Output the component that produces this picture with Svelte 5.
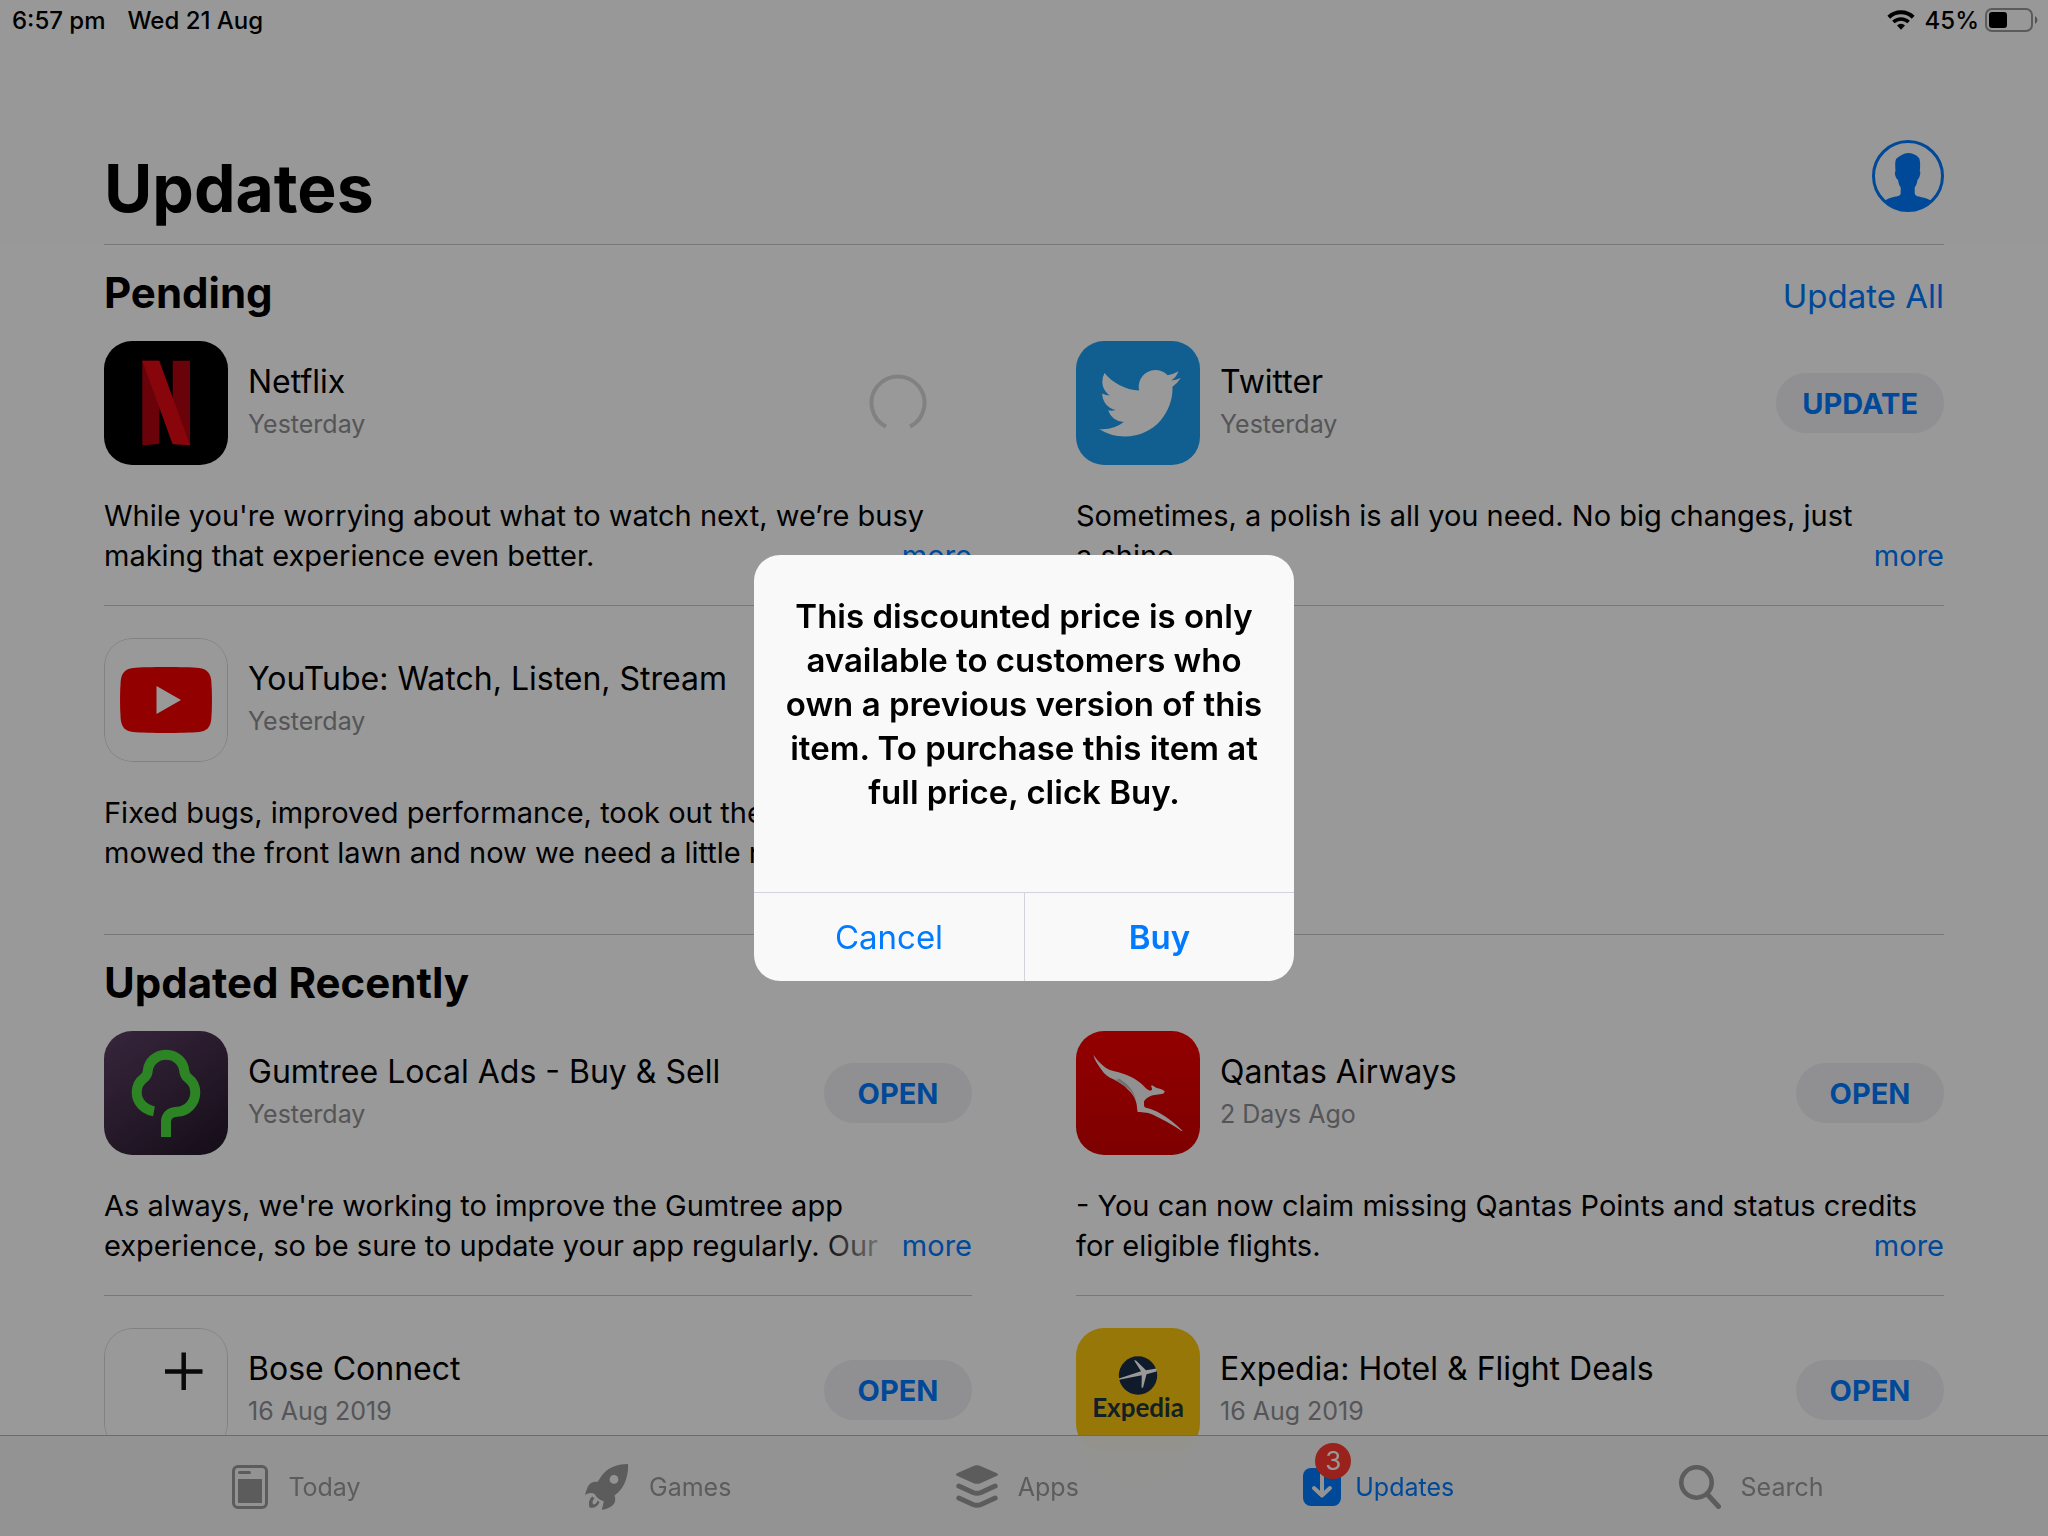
<script>
  const sections = [
    {
      title: 'Pending',
      action: 'Update All',
      apps: [
        { icon: 'netflix', name: 'Netflix', date: 'Yesterday', state: 'loading', notes: "While you're worrying about what to watch next, we’re busy making that experience even better." },
        { icon: 'twitter', name: 'Twitter', date: 'Yesterday', state: 'UPDATE', notes: 'Sometimes, a polish is all you need. No big changes, just\na shine.' },
        { icon: 'youtube', name: 'YouTube: Watch, Listen, Stream', date: 'Yesterday', state: 'UPDATE', notes: 'Fixed bugs, improved performance, took out the trash,\nmowed the front lawn and now we need a little rest.' }
      ]
    },
    {
      title: 'Updated Recently',
      action: '',
      apps: [
        { icon: 'gumtree', name: 'Gumtree Local Ads - Buy & Sell', date: 'Yesterday', state: 'OPEN', notes: "As always, we're working to improve the Gumtree app\nexperience, so be sure to update your app regularly. Our" },
        { icon: 'qantas', name: 'Qantas Airways', date: '2 Days Ago', state: 'OPEN', notes: '- You can now claim missing Qantas Points and status credits for eligible flights.' },
        { icon: 'bose', name: 'Bose Connect', date: '16 Aug 2019', state: 'OPEN', notes: '' },
        { icon: 'expedia', name: 'Expedia: Hotel & Flight Deals', date: '16 Aug 2019', state: 'OPEN', notes: '' }
      ]
    }
  ];
  const tabs = ['Today', 'Games', 'Apps', 'Updates', 'Search'];
</script>

<div class="screen">
  <div class="top">
    <div class="status">
      <span>6:57 pm</span>
      <span class="day">Wed 21 Aug</span>
      <svg class="wifi" width="28" height="20" viewBox="0 0 28 20" aria-label="Wi-Fi">
        <path d="M1.8 7.2A17.5 17.5 0 0 1 26.2 7.2" fill="none" stroke="#000" stroke-width="4" />
        <path d="M6.4 12A11 11 0 0 1 21.6 12" fill="none" stroke="#000" stroke-width="3.6" />
        <path d="M10 15.4a5.8 5.8 0 0 1 8 0l-4 4.4z" />
      </svg>
      <span class="charge">45%</span>
      <svg width="54" height="24" viewBox="0 0 54 24" aria-label="Battery">
        <rect x="1" y="1" width="46" height="22" rx="6" fill="none" stroke="#000" stroke-opacity=".4" stroke-width="2" />
        <rect x="4" y="4" width="18" height="16" rx="3" />
        <path d="M50 8a4.5 4.5 0 0 1 0 8z" fill-opacity=".45" />
      </svg>
    </div>
    <header>
      <h1>Updates</h1>
      <button class="avatar" aria-label="Account">
        <svg width="72" height="72" viewBox="0 0 72 72">
          <clipPath id="ring"><circle cx="36" cy="36" r="35" /></clipPath>
          <circle cx="36" cy="36" r="34.5" fill="none" stroke="#007aff" stroke-width="3" />
          <path clip-path="url(#ring)" fill="#007aff" d="M23.5 31C23 26 23 20 24.500 18.500C28 15.500 32 13 36 13C40 13 44 14.500 46.500 17.500C48.500 19 48.300 26 47.800 31C49 32 48 38 45.500 40C45 43 44.500 45 42.700 47.500V53C43 56.500 47 56.500 51 57.500C55 58.500 58 60 60 61V72H12V61C15 59 18 57.800 21.500 57C25 56.200 28.500 56.500 28.700 53V47.500C27 45 26.500 43 26 40C23.500 38 22 33 23.500 31Z" />
        </svg>
      </button>
    </header>
  </div>

  <main>
    {#each sections as section}
      <section>
        <div class="heading">
          <h2>{section.title}</h2>
          {#if section.action}<button class="link">{section.action}</button>{/if}
        </div>
        <div class="grid">
          {#each section.apps as app, i}
            <article class:ruled={i < 2}>
              <div class="app">
                <div class="tile">{@render tile(app.icon)}</div>
                <div class="label">
                  <h3>{app.name}</h3>
                  <p>{app.date}</p>
                </div>
                {#if app.state === 'loading'}
                  <svg class="spinner" width="58" height="58" viewBox="0 0 58 58" aria-label="Loading">
                    <path d="M17 52.600A26.500 26.500 0 1 1 41 52.600" fill="none" stroke="#d8d8dc" stroke-width="4" />
                  </svg>
                {:else}
                  <button class="pill">{app.state}</button>
                {/if}
              </div>
              <div class="notes">
                {#if app.notes}<button class="more">more</button>{/if}
                <p>{app.notes}</p>
              </div>
            </article>
          {/each}
        </div>
      </section>
    {/each}
  </main>

  <nav>
    {#each tabs as tab}
      <button class="tab" class:active={tab === 'Updates'}>
        <span class="glyph">
          {@render glyph(tab)}
          {#if tab === 'Updates'}<span class="badge">3</span>{/if}
        </span>
        {tab}
      </button>
    {/each}
  </nav>

  <div class="scrim">
    <div class="alert" role="alertdialog" aria-modal="true" aria-labelledby="alert-text">
      <p id="alert-text">This discounted price is only available to customers who own a previous version of this item. To purchase this item at full price, click Buy.</p>
      <div class="choices">
        <button>Cancel</button>
        <button class="primary">Buy</button>
      </div>
    </div>
  </div>
</div>

{#snippet tile(name)}
  <svg width="124" height="124" viewBox="0 0 124 124" aria-hidden="true">
    {#if name === 'netflix'}
      <rect width="124" height="124" />
      <path fill="#b1060f" d="M38.300 19.700H55.300V103L38.300 104.300zM68.700 19.700H86V104.300L68.700 103z" />
      <path fill="#e50914" d="M38.300 19.700H55.300L86 104.300L68.500 103z" />
    {:else if name === 'twitter'}
      <rect width="124" height="124" fill="#1d9ff0" />
      <path fill="#fff" transform="translate(23 21.300) scale(3.410)" d="M23.953 4.570a10 10 0 01-2.825.775 4.958 4.958 0 002.163-2.723c-.951.555-2.005.959-3.127 1.184a4.920 4.920 0 00-8.384 4.482C7.690 8.095 4.067 6.130 1.640 3.162a4.822 4.822 0 00-.666 2.475c0 1.710.870 3.213 2.188 4.096a4.904 4.904 0 01-2.228-.616v.060a4.923 4.923 0 003.946 4.827 4.996 4.996 0 01-2.212.085 4.936 4.936 0 004.604 3.417 9.867 9.867 0 01-6.102 2.105c-.390 0-.779-.023-1.170-.067a13.995 13.995 0 007.557 2.209c9.053 0 13.998-7.496 13.998-13.985 0-.210 0-.420-.015-.630A9.935 9.935 0 0024 4.590z" />
    {:else if name === 'youtube'}
      <rect x=".5" y=".5" width="123" height="123" rx="27.500" fill="#fff" stroke="#d8d8d8" />
      <path fill="#f60000" d="M62 29C76 29 88 29.300 95 30C103 31 106.500 35 107.300 43C108.200 55 108.200 69 107.300 81C106.500 89 103 93 95 94C80 95.300 44 95.300 29 94C21 93 17.500 89 16.700 81C15.800 69 15.800 55 16.700 43C17.500 35 21 31 29 30C36 29.300 48 29 62 29Z" />
      <path fill="#fff" d="M52.500 48L77 62L52.500 76z" />
    {:else if name === 'gumtree'}
      <linearGradient id="plum" x1=".2" y1="0" x2=".9" y2="1">
        <stop offset="0" stop-color="#583c60" />
        <stop offset=".55" stop-color="#3d2943" />
        <stop offset="1" stop-color="#24172a" />
      </linearGradient>
      <rect width="124" height="124" fill="url(#plum)" />
      <path fill="none" stroke="#4bdc3f" stroke-width="10" d="M50 80.300C40 78.500 32.700 71 32.700 61.300C32.700 55 36 50 40 47C43 44.500 43.500 43 43.700 40C44.500 31 52 23.800 62 23.800C72 23.800 79.500 31 80.300 40C80.500 43 81 44.500 84 47C88 50 91.300 55 91.300 61.300C91.300 72 83 80.500 73 80.700C66 81 62 85 62 91V106" />
    {:else if name === 'qantas'}
      <linearGradient id="red" x1="0" y1="0" x2="0" y2="1">
        <stop offset="0" stop-color="#f50000" />
        <stop offset="1" stop-color="#d20000" />
      </linearGradient>
      <rect width="124" height="124" fill="url(#red)" />
      <path fill="#f2f2f2" d="M17.300 23.700C21 29 27 36 34 39C40 41 45 41.500 50.700 44C56 46 61 49 65.700 53C69 56 71 59 74 59.700C76.500 59.500 76.500 58 75 55L76 54.300L80.700 57C84 57.500 86.500 58.500 88.700 60.300C88.500 62 87.500 62.700 85.700 63C81 64 76 63.500 72.300 66.300C69 68.500 67.500 70 68 72C68 74.500 68 76 69.300 76.500C74 77.500 79 79.500 84 82.300C92 87 100 93 106.700 100H105.500C98 95 91 90.500 84 87.300C79 84.500 75 82.500 70.700 81.700C67 81.200 64 81.500 61.500 80.700C61 77 61 74 60 70.700C58.500 66 56 62 52.300 59C48 54 43 51.500 37.300 48.300C32 46 28 43 25.700 39C22 34 18.500 29 17.300 23.700Z" />
      <path fill="#bbb" d="M42 47C51 52 58 59 60 69C57 62 53 58 49 55.500C45 52 42 50 38 48.300C41 49 43 49 42 47Z" />
    {:else if name === 'bose'}
      <rect x=".5" y=".5" width="123" height="123" rx="27.500" fill="#fff" stroke="#d8d8d8" />
      <path stroke="#111" stroke-width="4.500" d="M61 43.500H98.500M79.700 24.500V62" />
    {:else}
      <rect width="124" height="124" fill="#fcc60c" />
      <circle cx="62" cy="47.500" r="19.200" fill="#192d47" />
      <path fill="#fff" d="M43 50.500L65 43.200L58 32.300L60 32.500L70 42.300L80.500 40.500V43.500L70.500 46.300L67 59.700L65.500 59.500L65.800 47.300L43 51.800z" />
      <text class="wordmark" x="62" y="89" text-anchor="middle">Expedia</text>
    {/if}
  </svg>
{/snippet}

{#snippet glyph(name)}
  {#if name === 'Today'}
    <svg width="36" height="44" viewBox="0 0 36 44" aria-hidden="true">
      <rect x="1.500" y="1.500" width="33" height="41" rx="4.500" fill="none" stroke="currentColor" stroke-width="3" />
      <rect x="6" y="6" width="13" height="3" rx="1.500" fill="currentColor" />
      <rect x="6" y="14" width="24" height="24" fill="currentColor" />
    </svg>
  {:else if name === 'Games'}
    <svg width="44" height="46" viewBox="0 0 44 46" aria-hidden="true">
      <path fill="currentColor" fill-rule="evenodd" d="M43 0C33 0 25 3 19.500 8.500C16.500 11.500 14.500 15 12.500 18C8 17 4 19.500 2.500 23.500C1.500 26 .5 28.500 0 31C3 29 6.500 28 9.500 30C12 34 15 36.500 18.500 37C19 39.500 17 43 17 46C22 45 27.500 42.500 29.500 39C30.500 36.500 30.500 34 29.500 31.500C35 27.500 39 22 41 15.500C42.500 10.500 43.500 5 43 0ZM29 11A4.400 4.400 0 1 1 29 19.800A4.400 4.400 0 1 1 29 11Z" />
      <path fill="currentColor" d="M7.500 32.500C4 34.500 3.500 39 4.500 43.500C9 44.500 13 42.500 14.500 38L12.500 36.500C12 39 10.500 40.500 8 40.500C7 38 7.500 36 9.500 34.500z" />
    </svg>
  {:else if name === 'Apps'}
    <svg width="42" height="44" viewBox="0 0 42 44" aria-hidden="true">
      <path fill="currentColor" d="M17 1.200Q21 -.5 25 1.200L41 8.200Q43 9.500 41 10.800L25 18Q21 19.700 17 18L1 10.800Q-1 9.500 1 8.200z" />
      <path fill="none" stroke="currentColor" stroke-width="5" stroke-linecap="round" d="M2.800 21L17 27.500Q21 29.200 25 27.500L39.200 21M2.800 33L17 39.500Q21 41.200 25 39.500L39.200 33" />
    </svg>
  {:else if name === 'Updates'}
    <svg width="38" height="38" viewBox="0 0 38 38" aria-hidden="true">
      <rect width="38" height="38" rx="8" fill="currentColor" />
      <path fill="none" stroke="#f6f6f6" stroke-width="4" stroke-linecap="round" stroke-linejoin="round" d="M19 6V27M11 20L19 27.500L27 20" />
    </svg>
  {:else}
    <svg width="42" height="44" viewBox="0 0 42 44" aria-hidden="true">
      <circle cx="17.500" cy="17.500" r="15.200" fill="none" stroke="currentColor" stroke-width="4.600" />
      <path stroke="currentColor" stroke-width="5" stroke-linecap="round" d="M28.500 29.500L39.500 41.500" />
    </svg>
  {/if}
{/snippet}

<style>
  :global(body) { margin: 0; background: #fff; }
  .screen {
    height: 100vh;
    overflow: hidden;
    background: #fff;
    color: #000;
    font-family: Inter, 'Liberation Sans', sans-serif;
  }
  h1, h2, h3, p { margin: 0; }
  button {
    padding: 0;
    border: 0;
    background: none;
    color: #007aff;
    font: inherit;
    cursor: pointer;
  }
  svg { display: block; flex: none; }

  .top { background: #fdfdfd; }
  .status {
    display: flex;
    align-items: center;
    height: 40px;
    padding: 0 9px 0 12px;
    font-size: 24px;
    font-weight: 500;
  }
  .day { margin-left: 22px; }
  .wifi { margin-left: auto; }
  .charge { margin: 0 6px 0 10px; }

  header {
    display: flex;
    align-items: flex-end;
    justify-content: space-between;
    height: 188px;
    margin: 0 104px;
    padding-bottom: 16px;
    border-bottom: 1px solid #c8c8cc;
  }
  h1 { font-size: 66px; line-height: 80px; font-weight: 700; }
  .avatar { margin-bottom: 16px; }

  main { padding: 0 104px; }
  section { padding-bottom: 32px; border-bottom: 1px solid #c8c8cc; }
  .heading {
    display: flex;
    align-items: baseline;
    justify-content: space-between;
    height: 74px;
    padding-top: 22px;
  }
  h2 { font-size: 42px; line-height: 52px; font-weight: 700; }
  .link { font-size: 33px; }

  .grid {
    display: grid;
    grid-template-columns: 1fr 1fr;
    gap: 32px 104px;
  }
  article { min-width: 0; }
  .ruled { border-bottom: 1px solid #c8c8cc; }
  .app { display: flex; align-items: center; gap: 20px; }
  .tile { overflow: hidden; border-radius: 28px; }
  .wordmark { fill: #20353f; font: 700 26px Lato, sans-serif; }
  .label { flex: 1; min-width: 0; padding-bottom: 2px; }
  h3 { font-size: 32px; line-height: 40px; font-weight: 400; white-space: nowrap; }
  .label p { margin-top: 4px; color: #8e8e93; font-size: 25px; line-height: 36px; }
  .spinner { margin-right: 45px; }
  .pill {
    min-width: 148px;
    height: 60px;
    padding: 0 26px;
    border-radius: 30px;
    background: #f0f0f6;
    font-size: 29px;
    font-weight: 700;
  }

  /* The floated button sits at the end of the second line, so the text wraps before it. */
  .notes {
    height: 80px;
    overflow: hidden;
    padding: 31px 0 29px;
    font-size: 29px;
    line-height: 40px;
  }
  .notes::before { content: ''; float: right; height: 40px; }
  .notes p { white-space: pre-line; }
  .more { position: relative; float: right; clear: right; }
  .more::before {
    content: '';
    position: absolute;
    inset: 0 100% 0 auto;
    width: 84px;
    background: linear-gradient(to right, #fff0, #fff 80px);
  }

  nav {
    position: fixed;
    inset: auto 0 0;
    display: flex;
    justify-content: space-evenly;
    height: 98px;
    padding: 2px 0 0 8px;
    border-top: 1px solid #b2b2b2;
    background: #f5f5f5e8;
    backdrop-filter: blur(40px);
  }
  .tab {
    display: flex;
    align-items: center;
    gap: 20px;
    color: #999;
    font-size: 25px;
  }
  .active { gap: 14px; color: #007aff; }
  .glyph { position: relative; }
  .badge {
    position: absolute;
    top: -25px;
    left: 12px;
    width: 36px;
    border-radius: 18px;
    background: #ff3b30;
    color: #fff;
    font-size: 26px;
    line-height: 36px;
    text-align: center;
  }

  .scrim {
    position: fixed;
    inset: 0;
    display: grid;
    place-items: center;
    background: #0006;
  }
  .alert {
    width: 540px;
    overflow: hidden;
    border-radius: 26px;
    background: #f9f9f9;
    text-align: center;
  }
  .alert p {
    padding: 39px 28px 78px;
    font-size: 33px;
    line-height: 44px;
    font-weight: 600;
  }
  .choices { display: grid; grid-template-columns: 1fr 1fr; border-top: 1px solid #d2d4dc; }
  .choices button { height: 88px; font-size: 33px; }
  .choices .primary { border-left: 1px solid #d2d4dc; font-weight: 600; }
</style>
